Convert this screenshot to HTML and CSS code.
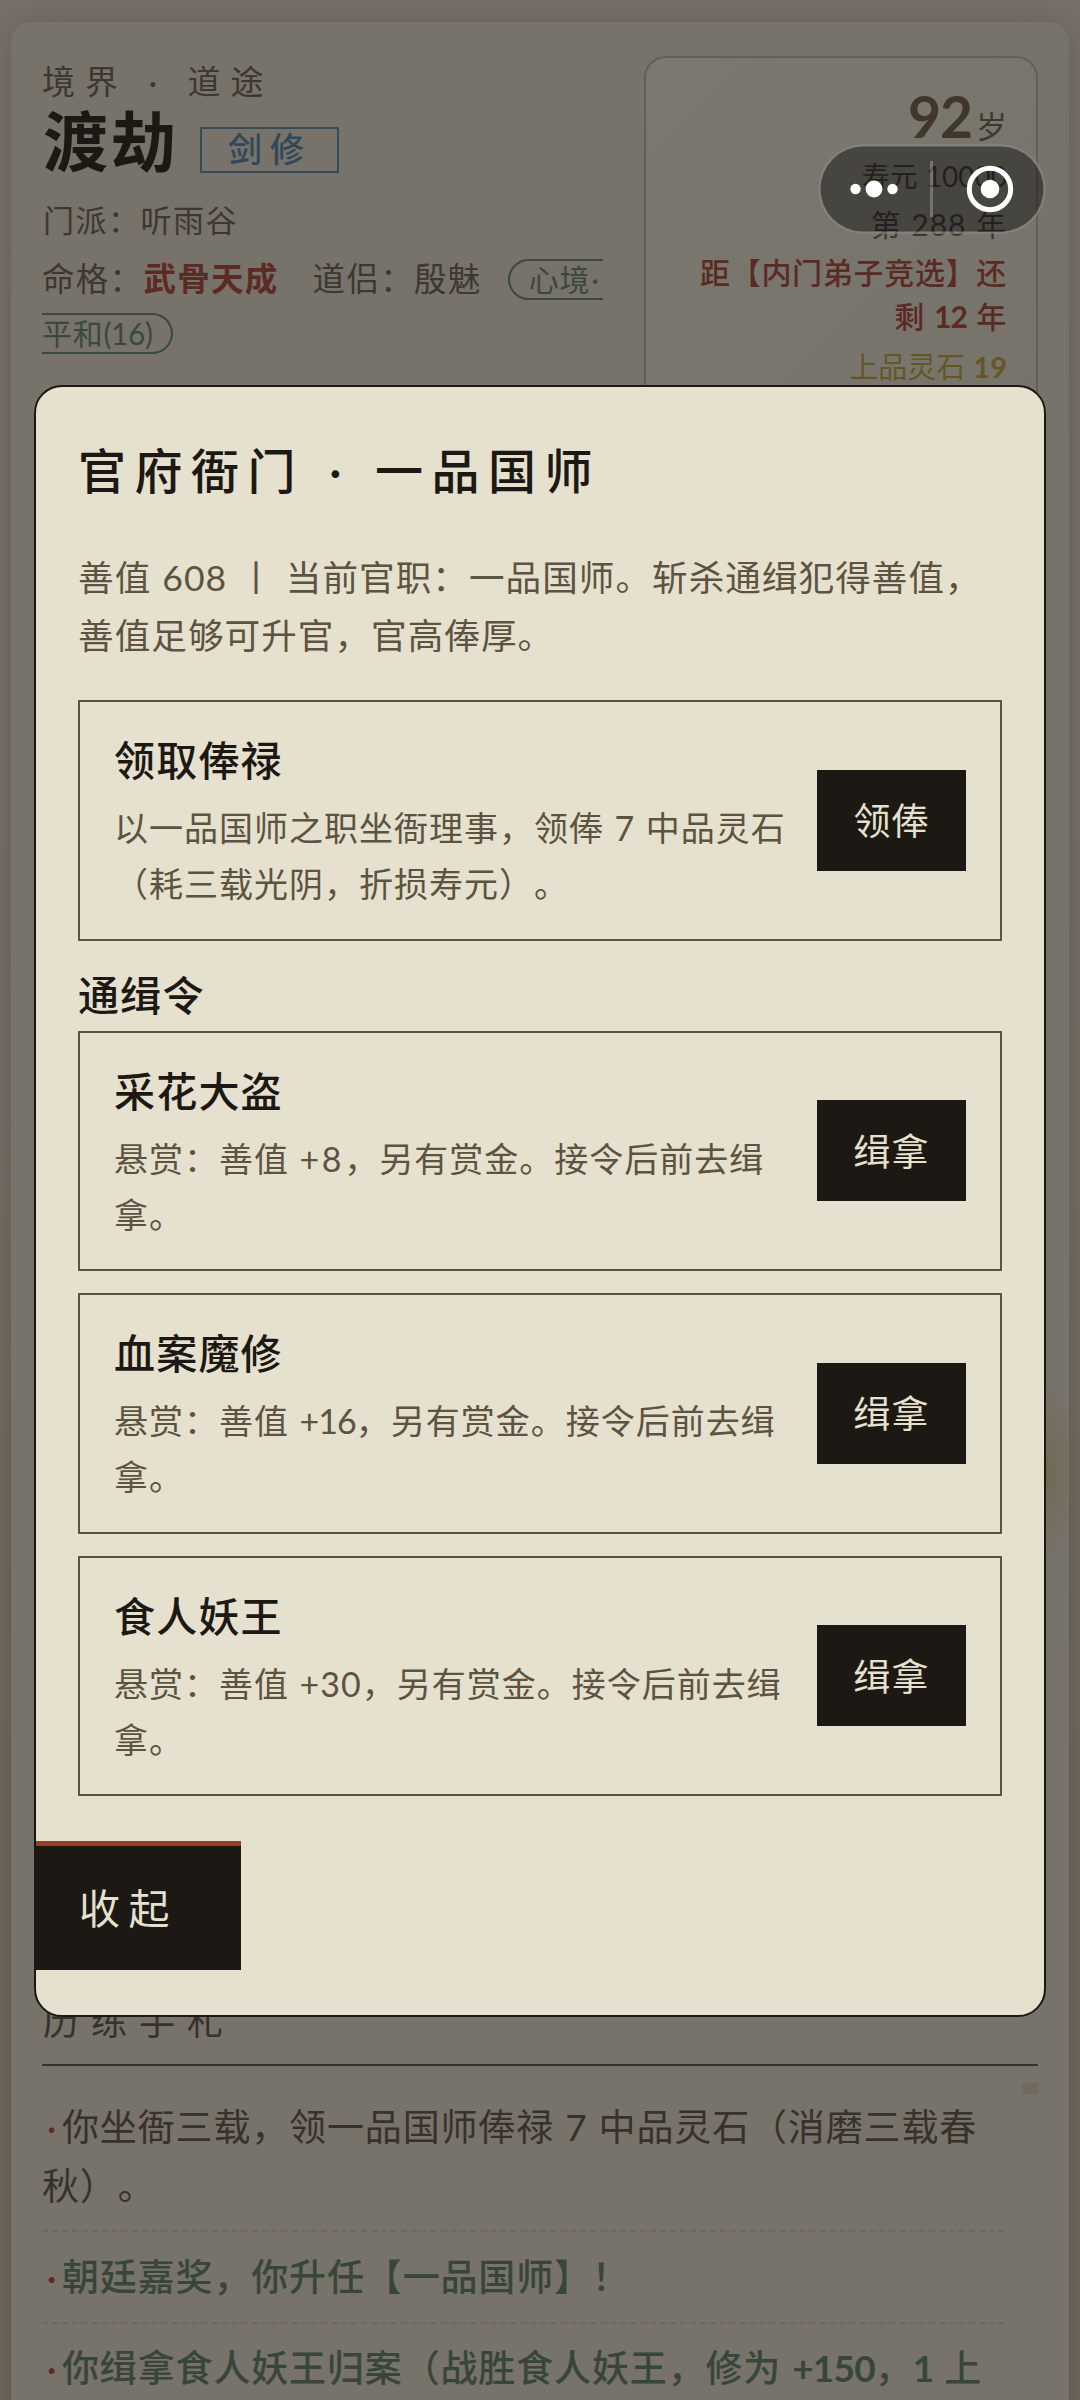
FILE: index.html
```html
<!DOCTYPE html>
<html lang="zh-CN">
<head>
<meta charset="utf-8">
<title>官府衙门</title>
<link rel="stylesheet" href="styles.css">
</head>
<body>
<main class="paper">
  <header class="status">
    <section class="hero">
      <div class="hero-label">境界 · 道途</div>
      <div class="hero-rank"><h1>渡劫</h1><span class="path-tag">剑修</span></div>
      <div class="hero-sect">门派：听雨谷</div>
      <div class="hero-fate">命格：<b class="fate">武骨天成</b><span class="mate">道侣：殷魅</span><span class="mood">心境<span class="mood-dot">·</span><br>平和<span class="mood-value">(16)</span></span></div>
    </section>
    <aside class="age-card">
      <div class="age"><b>92</b><span>岁</span></div>
      <div class="life">寿元 10000</div>
      <div class="year">第 288 年</div>
      <div class="event">距【内门弟子竞选】还<br>剩 <b class="num">12</b> 年</div>
      <div class="stones">上品灵石 <b>19</b></div>
    </aside>
  </header>
  <section class="journal">
    <h2>历练手札</h2>
    <div class="scroll-thumb"></div>
    <ul>
      <li><i>·</i>你坐衙三载，领一品国师俸禄 7 中品灵石（消磨三载春<br>秋）。</li>
      <li class="good"><i>·</i>朝廷嘉奖，你升任【一品国师】！</li>
      <li class="good"><i>·</i>你缉拿食人妖王归案（战胜食人妖王，修为 <b class="num">+150</b>，<b class="num">1</b> 上</li>
    </ul>
  </section>
</main>

<div class="capsule">
  <svg width="228" height="90" viewBox="0 0 228 90">
    <g fill="#fff">
      <circle cx="37.5" cy="45" r="5.2"/><circle cx="56" cy="45" r="8.4"/><circle cx="74.5" cy="45" r="5.2"/>
      <circle cx="172" cy="45" r="9.3"/>
    </g>
    <rect x="112" y="17" width="3" height="56" fill="#fff" opacity=".25"/>
    <circle cx="172" cy="45" r="20.7" fill="none" stroke="#fff" stroke-width="5"/>
  </svg>
</div>

<div class="modal" role="dialog">
  <h2 class="modal-title">官府衙门 · 一品国师</h2>
  <p class="intro">善值 608 丨 当前官职：一品国师。斩杀通缉犯得善值，<br>善值足够可升官，官高俸厚。</p>
  <div class="card">
    <div class="card-text"><h3>领取俸禄</h3><p>以一品国师之职坐衙理事，领俸 7 中品灵石<br>（耗三载光阴，折损寿元）。</p></div>
    <button class="act">领俸</button>
  </div>
  <h3 class="section-title">通缉令</h3>
  <div class="cards">
    <div class="card">
      <div class="card-text"><h3>采花大盗</h3><p>悬赏：善值 <span class="loose">+8</span>，另有赏金。接令后前去缉<br>拿。</p></div>
      <button class="act">缉拿</button>
    </div>
    <div class="card">
      <div class="card-text"><h3>血案魔修</h3><p>悬赏：善值 <span class="tight">+16</span>，另有赏金。接令后前去缉<br>拿。</p></div>
      <button class="act">缉拿</button>
    </div>
    <div class="card">
      <div class="card-text"><h3>食人妖王</h3><p>悬赏：善值 +30，另有赏金。接令后前去缉<br>拿。</p></div>
      <button class="act">缉拿</button>
    </div>
  </div>
  <button class="close">收起</button>
</div>
</body>
</html>
```
FILE: styles.css
```css
* { box-sizing: border-box; margin: 0; padding: 0; }

body {
  position: relative;
  width: 1080px;
  height: 2400px;
  padding: 22px 11px 0;
  overflow: hidden;
  background: linear-gradient(#77716a 0, #756f67 900px, #70685d 1800px, #70685d 2400px);
  font-family: Lato, "Noto Sans CJK SC", sans-serif;
  word-spacing: .05em;
  white-space: nowrap;
  text-spacing-trim: space-all;
  color: #1c1914;
}

button { border: 0; font: inherit; word-spacing: inherit; }
i { font-style: normal; }
.tight { letter-spacing: -1px; }
.loose { letter-spacing: 2.6px; }
.num { font-weight: 700; letter-spacing: -.8px; }

.paper {
  height: 2420px;
  padding: 34px 31px 0;
  border-radius: 20px;
  background: radial-gradient(ellipse 36px 90px at 1030px 1450px, #706850, #77726a00) #77726a;
  box-shadow: 0 0 34px rgba(30, 22, 12, .2);
}

.status { display: flex; justify-content: space-between; height: 1941px; }

.hero { width: 562px; color: #3d3730; }
.hero-label { font-size: 33px; letter-spacing: 9.9px; line-height: 51px; word-spacing: .07em; }
.hero-rank { display: flex; align-items: flex-start; height: 84px; }
.hero-rank h1 { font-size: 65px; font-weight: 700; letter-spacing: 3px; line-height: 68px; padding-left: 1px; color: #1c1914; }
.path-tag {
  width: 139px; height: 46px; margin: 20px 0 0 21px; padding-left: 26px;
  border: 2px solid #344c5a; color: #304859;
  font-size: 34px; font-weight: 500; letter-spacing: 8px; line-height: 40px;
}
.hero-sect { font-size: 31px; letter-spacing: 1.5px; line-height: 58px; padding-left: 1px; }
.hero-fate { padding-top: 3px; font-size: 32.5px; letter-spacing: 1.3px; line-height: 54px; }
.fate { color: #5c2a22; }
.mate { margin-left: 34px; }
.mood {
  margin-left: 26px; padding: 0 19px 1px;
  border: 2px solid #3b493d; border-radius: 23px;
  font-size: 30px; letter-spacing: .8px; color: #3b493d;
}
.mood-dot { padding: 0 3px 0 1px; }
.mood-value { letter-spacing: -.5px; }

.age-card {
  width: 394px; height: 420px; padding: 26px 29px 0 0;
  border: 2px solid #645f56; border-radius: 22px;
  background: linear-gradient(135deg, #7a786f, #77736b);
  text-align: right; color: #3d3932;
}
.age { display: flex; justify-content: flex-end; align-items: baseline; height: 67px; line-height: 64px; }
.age b { font-size: 57px; letter-spacing: -1px; color: #40372a; }
.age span { font-size: 31px; margin-left: 4px; }
.life { font-size: 28px; line-height: 50px; }
.year { font-size: 30px; line-height: 46px; letter-spacing: 1px; }
.event { font-size: 30px; font-weight: 500; line-height: 44px; letter-spacing: .7px; color: #5a2b22; padding-top: 3px; }
.stones { font-size: 29px; line-height: 50px; color: #655628; padding-top: 4px; }

.journal { position: relative; color: #37312a; }
.journal h2 {
  height: 69px; border-bottom: 2px solid #38322a; padding-left: 1px;
  font-size: 36px; font-weight: 400; letter-spacing: 12px; line-height: 48px;
}
.journal ul { padding: 16px 33px 0 0; list-style: none; }
.journal li {
  padding: 14.5px 0 15.5px; border-bottom: 2px dashed #70675f;
  font-size: 37px; letter-spacing: .85px; line-height: 59.2px;
}
.journal li i { display: inline-block; width: 20px; text-align: center; color: #5c2a22; }
.journal .good { color: #38463a; font-weight: 500; }
.scroll-thumb { position: absolute; top: 86px; right: 0; width: 16px; height: 11px; background: #70695c; }

.capsule {
  position: absolute; left: 818px; top: 144px; width: 228px; height: 90px;
  border-radius: 45px; background: rgba(0, 0, 0, .41);
  box-shadow: inset 0 0 0 2.5px rgba(255, 255, 255, .32);
}
.capsule svg { display: block; }

.modal {
  position: absolute; left: 34px; top: 385px; width: 1012px; height: 1632px;
  padding: 48px 42px 0; overflow: hidden;
  border: 2px solid #1c1914; border-radius: 28px; background: #e6e0ce;
}
.modal-title { font-size: 48px; font-weight: 500; letter-spacing: 8.5px; line-height: 72px; word-spacing: .09em; }
.intro { margin-top: 42px; font-size: 35.6px; letter-spacing: 1.05px; line-height: 58px; color: #5c5340; }
.card {
  display: flex; justify-content: space-between; align-items: center;
  height: 240.5px; padding: 0 34px; border: 2px solid #5c5340;
}
.intro + .card { margin-top: 35px; }
.card h3 { margin-bottom: 9px; font-size: 41px; font-weight: 500; letter-spacing: 1.2px; line-height: 60px; }
.card p { font-size: 34px; letter-spacing: 1px; line-height: 56px; color: #5c5340; }
.card-text { width: 680px; padding-top: 3px; }
.act {
  flex: none; width: 149px; height: 101px; padding-bottom: 2px; background: #1c1914; color: #e6e0ce;
  font-size: 37px; letter-spacing: 1px;
}
.section-title { padding-top: 25px; height: 90px; font-size: 41px; font-weight: 500; letter-spacing: 1.2px; line-height: 60px; }
.cards { display: flex; flex-direction: column; gap: 22px; }
.close {
  display: block; width: 205px; height: 129px; margin: 45px 0 0 -42px; padding: 0 0 5px 43px;
  border-top: 5px solid #963c2a; background: #1c1914; color: #e6e0ce;
  font-size: 41px; letter-spacing: 8.5px; text-align: left;
}
```
